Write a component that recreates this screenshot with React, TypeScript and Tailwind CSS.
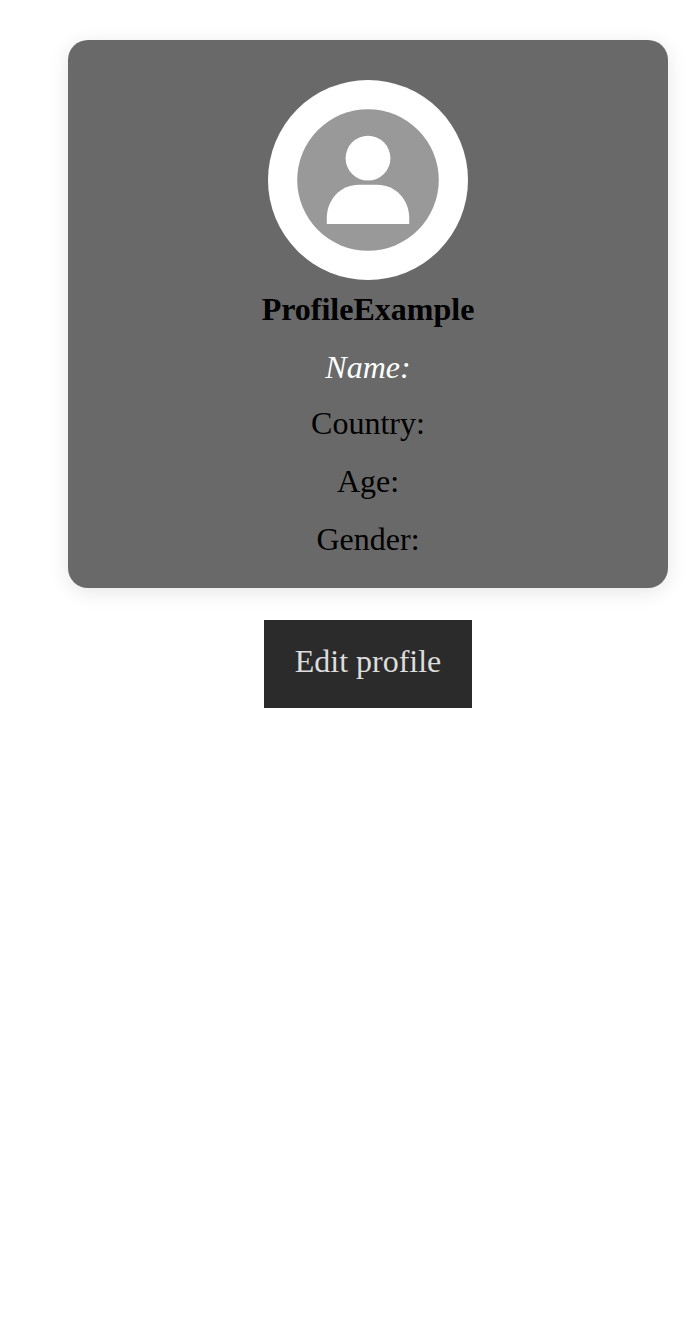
const rows = [
  { label: "Country:", className: "mt-5" },
  { label: "Age:", className: "mt-[22px]" },
  { label: "Gender:", className: "mt-[22px]" },
];

export default function App() {
  return (
    <main className="flex min-h-screen flex-col items-center bg-white pt-10 pl-[50px] font-['Liberation_Serif',serif] text-[32px] leading-9 text-black">
      <section className="flex h-[548px] w-[600px] flex-col items-center rounded-[20px] bg-[#696969] pt-10 shadow-[0_4px_20px_rgba(0,0,0,0.1)]">
        <svg className="size-[200px] shrink-0" viewBox="0 0 200 200" aria-hidden="true">
          <circle cx="100" cy="100" r="100" fill="#fff" />
          <circle cx="100" cy="100" r="70.8" fill="#999" />
          <circle cx="100" cy="78.2" r="22.4" fill="#fff" />
          <path d="M58.8 144V138C58.8 119.5 72.5 104.7 91 104.7H109C127.5 104.7 141.2 119.5 141.2 138V144Z" fill="#fff" />
        </svg>
        <h1 className="mt-[11px] font-bold">ProfileExample</h1>
        <p className="mt-[22px] text-white italic">Name:</p>
        {rows.map((row) => (
          <p key={row.label} className={row.className}>{row.label}</p>
        ))}
      </section>
      <button className="mt-8 h-[88px] w-[208px] bg-[#2b2b2b] pb-1.5 text-[#ddd]">Edit profile</button>
    </main>
  );
}
